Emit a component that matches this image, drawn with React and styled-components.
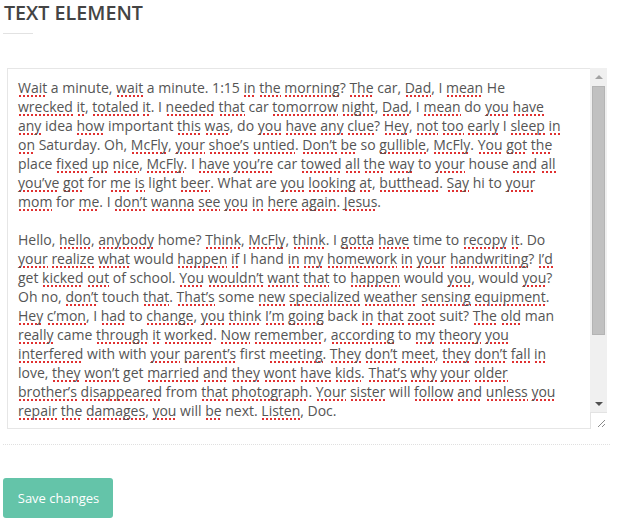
import React from "react";
import styled, { createGlobalStyle } from "styled-components";

const GlobalStyle = createGlobalStyle`
  html, body { margin: 0; padding: 0; background: #fff; }
  body { font-family: "Open Sans", "Noto Sans", sans-serif; }
`;

const Page = styled.div`
  width: 618px;
  box-sizing: border-box;
  padding: 1px 8px 0 3px;
  display: flex;
  flex-direction: column;
  align-items: flex-start;
`;

const Title = styled.h2`
  margin: 0 0 0 1px;
  font-size: 19.7px;
  font-weight: 600;
  color: #444;
  line-height: 24px;
`;

const TitleRule = styled.div`
  width: 30px;
  height: 1px;
  background: #e2e2e2;
  margin-top: 8px;
`;

const FieldWrap = styled.div`
  margin-top: 34px;
  padding-left: 4px;
`;

const TextBox = styled.div`
  width: 600px;
  height: 361px;
  box-sizing: border-box;
  border: 1px solid #e6e6e6;
  display: flex;
  background: #fff;
`;

const TextContent = styled.div`
  flex: 1;
  overflow: hidden;
  padding: 9px 10px;
  font-size: 14px;
  line-height: 19px;
  color: #555;
`;

const Line = styled.div`
  height: 19px;
  white-space: pre;
`;

const Misspelled = styled.span`
  background-image:
    linear-gradient(135deg, transparent 40%, #e03030 40%, #e03030 60%, transparent 60%),
    linear-gradient(45deg, transparent 40%, #e03030 40%, #e03030 60%, transparent 60%);
  background-size: 4px 2px;
  background-repeat: repeat-x;
  background-position: 0 calc(100% - 0px);
`;

const ScrollBar = styled.div`
  width: 17px;
  margin: -1px -1px -1px 0;
  display: flex;
  flex-direction: column;
  background: #f0f0f0;
`;

const ArrowButton = styled.div`
  height: 17px;
  display: flex;
  align-items: center;
  justify-content: center;
  &::after {
    content: "";
    width: 0;
    height: 0;
    border-left: 4px solid transparent;
    border-right: 4px solid transparent;
    ${(p) =>
      p.$dir === "up"
        ? `border-bottom: 4px solid ${p.$disabled ? "#a3a3a3" : "#505050"};`
        : `border-top: 4px solid ${p.$disabled ? "#a3a3a3" : "#505050"};`}
  }
`;

const Track = styled.div`
  flex: 1;
  padding: 1px 2px;
`;

const Thumb = styled.div`
  height: 249px;
  background: #c1c1c1;
  border: 1px solid #b4b4b4;
  box-sizing: border-box;
`;

const Resizer = styled.div`
  height: 17px;
  background: #fff;
  border-top: 1px solid #e3e3e3;
  border-left: 1px solid #e3e3e3;
  box-sizing: border-box;
  display: flex;
  align-items: flex-end;
  justify-content: flex-end;
  padding: 0 2px 2px 0;
`;

const Divider = styled.div`
  align-self: stretch;
  margin-top: 15px;
  border-top: 1px dotted #e0e0e0;
`;

const SaveButton = styled.button`
  margin-top: 33px;
  width: 110px;
  height: 40px;
  border: none;
  border-radius: 3px;
  background: #64c4a9;
  color: #fff;
  font-family: "Open Sans", "Noto Sans", sans-serif;
  font-size: 13px;
  padding: 0 0 0 1px;
  cursor: pointer;
`;

const paragraphs = [
  [
    "_Wait_ a minute, _wait_ a minute. 1:15 _in_ _the_ _morning_? _The_ car, _Dad_, I _mean_ He",
    "_wrecked_ _it_, _totaled_ _it_. I _needed_ _that_ car _tomorrow_ _night_, _Dad_, I _mean_ do _you_ _have_",
    "_any_ idea _how_ important _this_ _was_, do _you_ _have_ _any_ _clue_? _Hey_, _not_ _too_ _early_ I _sleep_ _in_",
    "_on_ Saturday. Oh, _McFly_, _your_ _shoe’s_ _untied_. _Don’t_ _be_ so _gullible_, _McFly_. _You_ _got_ _the_",
    "place _fixed_ _up_ _nice_, _McFly_. I _have_ _you’re_ car _towed_ _all_ _the_ _way_ to _your_ house _and_ _all_",
    "_you’ve_ _got_ for _me_ _is_ light _beer_. What are _you_ _looking_ _at_, _butthead_. _Say_ hi to _your_",
    "_mom_ for _me_. I _don’t_ _wanna_ _see_ _you_ _in_ _here_ _again_. _Jesus_.",
  ],
  [
    "Hello, _hello_, _anybody_ home? _Think_, _McFly_, _think_. I _gotta_ _have_ time to _recopy_ _it_. Do",
    "_your_ _realize_ _what_ would _happen_ _if_ I hand _in_ _my_ _homework_ _in_ _your_ _handwriting_? _I’d_",
    "get _kicked_ _out_ of school. _You_ _wouldn’t_ _want_ _that_ to _happen_ would _you_, would _you_?",
    "Oh no, _don’t_ touch _that_. _That’s_ some _new_ _specialized_ _weather_ _sensing_ _equipment_.",
    "_Hey_ _c’mon_, I _had_ to _change_, _you_ _think_ _I’m_ _going_ back _in_ _that_ _zoot_ suit? _The_ _old_ man",
    "_really_ came _through_ _it_ _worked_. _Now_ _remember_, _according_ to _my_ _theory_ _you_",
    "_interfered_ with with _your_ _parent’s_ first _meeting_. _They_ _don’t_ _meet_, _they_ _don’t_ _fall_ _in_",
    "love, _they_ _won’t_ get _married_ _and_ _they_ _wont_ _have_ _kids_. _That’s_ _why_ _your_ _older_",
    "_brother’s_ _disappeared_ from _that_ _photograph_. _Your_ _sister_ will _follow_ _and_ _unless_ _you_",
    "_repair_ _the_ _damages_, _you_ will _be_ next. _Listen_, Doc.",
  ],
];

function renderLine(text) {
  const parts = text.split(/_([^_]+)_/);
  return parts.map((part, i) =>
    i % 2 === 1 ? <Misspelled key={i}>{part}</Misspelled> : <React.Fragment key={i}>{part}</React.Fragment>
  );
}

export default function App() {
  const lines = [];
  paragraphs.forEach((para, pi) => {
    if (pi > 0) lines.push(<Line key={`gap-${pi}`}> </Line>);
    para.forEach((l, li) => lines.push(<Line key={`${pi}-${li}`}>{renderLine(l)}</Line>));
  });

  return (
    <>
      <GlobalStyle />
      <Page>
        <Title>TEXT ELEMENT</Title>
        <TitleRule />
        <FieldWrap>
          <TextBox role="textbox" aria-multiline="true">
            <TextContent>{lines}</TextContent>
            <ScrollBar>
              <ArrowButton $dir="up" $disabled />
              <Track>
                <Thumb />
              </Track>
              <ArrowButton $dir="down" />
              <Resizer>
                <svg width="8" height="8" viewBox="0 0 8 8">
                  <line x1="1" y1="8" x2="8" y2="1" stroke="#8a8a8a" strokeWidth="1" />
                  <line x1="5" y1="8" x2="8" y2="5" stroke="#8a8a8a" strokeWidth="1" />
                </svg>
              </Resizer>
            </ScrollBar>
          </TextBox>
        </FieldWrap>
        <Divider />
        <SaveButton>Save changes</SaveButton>
      </Page>
    </>
  );
}
